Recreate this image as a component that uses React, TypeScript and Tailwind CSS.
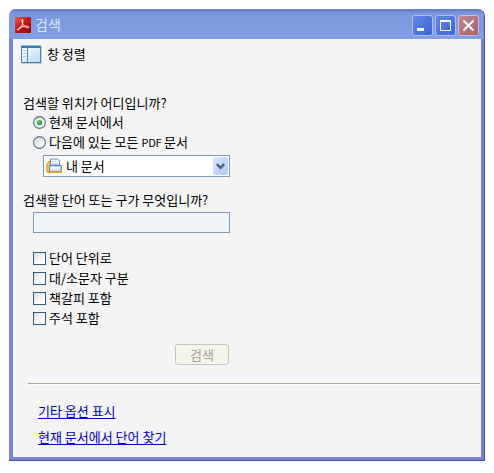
import { ReactNode } from "react";

function Radio({ checked, children }: { checked?: boolean; children: ReactNode }) {
  return (
    <label className="flex h-5 items-center gap-[3px]">
      <svg width="13" height="13" viewBox="0 0 13 13" className="shrink-0">
        <defs>
          <linearGradient id="radioFill" x1="0" y1="0" x2="1" y2="1">
            <stop offset="0" stopColor="#dddeda" />
            <stop offset="1" stopColor="#ffffff" />
          </linearGradient>
          <radialGradient id="radioDot" cx="0.4" cy="0.35" r="0.7">
            <stop offset="0" stopColor="#62d35f" />
            <stop offset="1" stopColor="#178a1a" />
          </radialGradient>
        </defs>
        <circle cx="6.5" cy="6.5" r="5.9" fill="url(#radioFill)" stroke="#4f6f8f" strokeWidth="1.1" />
        {checked && <circle cx="6.5" cy="6.5" r="2.6" fill="url(#radioDot)" />}
      </svg>
      <span className="whitespace-nowrap">{children}</span>
    </label>
  );
}

function Check({ children }: { children: ReactNode }) {
  return (
    <label className="flex h-5 items-center gap-[3px]">
      <span className="size-[13px] shrink-0 border border-[#2c5a87] bg-linear-to-br from-[#dcdcd5] to-white to-70%" />
      <span className="whitespace-nowrap">{children}</span>
    </label>
  );
}

function CaptionButton({ close, children }: { close?: boolean; children: ReactNode }) {
  return (
    <button
      className={
        "flex size-[21px] items-center justify-center rounded-[3px] border " +
        (close
          ? "border-[#cdb9dc] bg-linear-to-br from-[#bd8791] to-[#a86069]"
          : "border-[#a9bff5] bg-linear-to-br from-[#6587e6] to-[#3b62d8]")
      }
    >
      <svg width="19" height="19" viewBox="0 0 19 19" fill="none" stroke="#fff" className="shrink-0">
        {children}
      </svg>
    </button>
  );
}

export default function App() {
  return (
    <div className="h-[473px] w-[494px] bg-white pt-[9px] pl-[9px] font-['Noto_Sans_CJK_KR',sans-serif] text-[13px] leading-5 text-black">
      <div className="flex h-[452px] w-[476px] flex-col rounded-t-[7px] border-r border-b border-[#4b4da6] bg-[#7a84d0]">
        <header className="flex h-[30px] shrink-0 items-center rounded-t-[7px] bg-linear-to-b from-[#6678c0] via-[#7b98df] via-15% to-[#829fe6] pt-[2px] pr-[5px] pl-[6px]">
          <svg width="16" height="16" viewBox="0 0 16 16" className="shrink-0">
            <defs>
              <linearGradient id="acrobat" x1="0" y1="0" x2="1" y2="1">
                <stop offset="0" stopColor="#ed5a50" />
                <stop offset="0.5" stopColor="#c51416" />
                <stop offset="1" stopColor="#8c0508" />
              </linearGradient>
            </defs>
            <rect width="16" height="16" rx="1" fill="url(#acrobat)" />
            <path
              d="M7 2.5C8.8 2.3 7.9 6.3 6.5 9C5 12 3.2 13.8 2.5 13C1.8 11.8 6 9.8 9.5 9.2C13 8.7 14.5 9.8 13.5 10.8C12.2 11.8 9.2 9.2 7.8 6.7C6.7 4.7 6.2 2.8 7 2.5Z"
              fill="none"
              stroke="#fff"
              strokeWidth="0.9"
            />
          </svg>
          <h1 className="-mt-[2px] ml-1 flex-1 text-[14px] font-normal text-[#dce8ff]">검색</h1>
          <div className="flex gap-[2px] pt-px">
            <CaptionButton>
              <path d="M4 13.5h7" strokeWidth="3" />
            </CaptionButton>
            <CaptionButton>
              <path d="M4.5 5v9.5h10V5" />
              <path d="M4 5h11" strokeWidth="2" />
            </CaptionButton>
            <CaptionButton close>
              <path d="M4.5 4.5l10 10M14.5 4.5l-10 10" strokeWidth="2" />
            </CaptionButton>
          </div>
        </header>

        <main className="mx-1 mr-[3px] mb-[3px] flex flex-1 flex-col bg-[#f4f4f4]">
          <div className="flex h-[30px] items-center gap-[5px] pl-2">
            <svg width="21" height="19" viewBox="0 0 21 19" className="shrink-0">
              <defs>
                <linearGradient id="paneFill" x1="0" y1="0" x2="1" y2="1">
                  <stop offset="0" stopColor="#ffffff" />
                  <stop offset="1" stopColor="#b9daf1" />
                </linearGradient>
              </defs>
              <rect x="1" y="2" width="20" height="17" fill="#c5ced5" />
              <rect x="0.5" y="1" width="19" height="16.5" fill="url(#paneFill)" stroke="#4083ab" />
              <path d="M0.5 2h19" stroke="#3e80ad" strokeWidth="2" />
              <path d="M6.5 3v14" stroke="#4c8fb8" />
              <path d="M2 5.5h3M2 8.5h3M2 11.5h3" stroke="#a9cae0" />
            </svg>
            <span>창 정렬</span>
          </div>

          <section className="mt-6 pl-[10px]">
            <h2 className="h-[19px] font-normal">검색할 위치가 어디입니까?</h2>
            <div className="pl-[10px]">
              <Radio checked>현재 문서에서</Radio>
              <Radio>
                다음에 있는 모든 <span className="text-[11px] tracking-[-0.3px]">PDF</span> 문서
              </Radio>
              <div className="mt-[3px] ml-[10px] flex h-[22px] w-[187px] items-center border border-[#7f9db9] bg-white pr-px pl-[2px]">
                <svg width="17" height="16" viewBox="0 0 17 16" className="shrink-0">
                  <path d="M0.7 6.5L3 3h2v8l-2 4H2L0.7 13z" fill="#f8c650" stroke="#cf952c" />
                  <path d="M4.5 7V1h7l2 2v4z" fill="#fff" stroke="#6790cb" />
                  <path d="M6.5 3.5h4M6.5 5.5h5" stroke="#bfd3ee" />
                  <path d="M3.5 7.5h11.8v5l-1.2 1H3.5z" fill="#c5dbf7" stroke="#5b86c4" />
                  <path d="M5 9h8v2.5H5z" fill="#f7fbff" />
                  <path d="M1.5 13.5h13l1-2v3.2H2.5z" fill="#f6bb3d" stroke="#cf952c" strokeWidth="0.8" />
                </svg>
                <span className="ml-[3px] flex-1">내 문서</span>
                <span className="flex h-[18px] w-[15px] items-center justify-center rounded-[2px] bg-linear-to-br from-[#dbe6ff] to-[#b2c8f6]">
                  <svg width="9" height="7" viewBox="0 0 9 7" fill="none" stroke="#4d6185" strokeWidth="2.4">
                    <path d="M0.8 1.2l3.7 3.7L8.2 1.2" />
                  </svg>
                </span>
              </div>
            </div>
          </section>

          <section className="mt-[13px] pl-[10px]">
            <h2 className="h-5 font-normal">검색할 단어 또는 구가 무엇입니까?</h2>
            <div className="pl-[10px]">
              <input
                type="text"
                className="mt-[2px] block h-[21px] w-[197px] border border-[#8198b2] bg-[#f1f4f8]"
              />
              <div className="mt-[15px]">
                <Check>단어 단위로</Check>
                <Check>대/소문자 구분</Check>
                <Check>책갈피 포함</Check>
                <Check>주석 포함</Check>
              </div>
            </div>
          </section>

          <button className="mt-4 ml-[162px] h-[21px] w-[54px] rounded-[3px] border border-[#c9c7ba] bg-[#f5f4ea] leading-[17px] text-[#a5a393]">
            검색
          </button>

          <hr className="mt-[18px] mr-px ml-[15px] h-[2px] border-t border-b border-t-[#a9a998] border-b-white" />

          <nav className="mt-4 flex flex-col items-start gap-[6px] pl-[25px] text-[#0000c8]">
            <a className="underline underline-offset-2">기타 옵션 표시</a>
            <a className="underline underline-offset-2">현재 문서에서 단어 찾기</a>
          </nav>
        </main>
      </div>
    </div>
  );
}
